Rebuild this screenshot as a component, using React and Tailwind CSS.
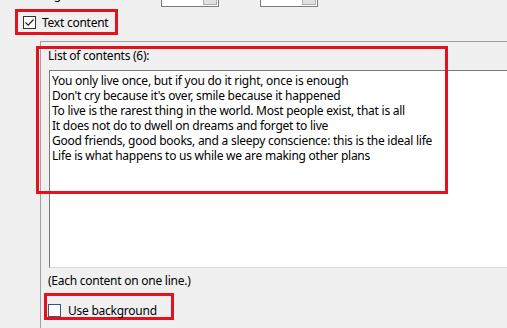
const QUOTES = [
  'You only live once, but if you do it right, once is enough',
  "Don't cry because it's over, smile because it happened",
  'To live is the rarest thing in the world. Most people exist, that is all',
  'It does not do to dwell on dreams and forget to live',
  'Good friends, good books, and a sleepy conscience: this is the ideal life',
  'Life is what happens to us while we are making other plans',
]

function Combo() {
  return (
    <div className="flex h-[21px] w-[58px] justify-end border border-[#7a7a7a] bg-white p-px">
      <div className="flex w-[14px] items-center justify-center border border-[#adadad] bg-[#e1e1e1]">
        <div className="h-0 w-0 border-x-[3px] border-t-[3px] border-x-transparent border-t-black" />
      </div>
    </div>
  )
}

function Check({ checked, color = 'border-[#333333]' }) {
  return (
    <div className={`flex h-[13px] w-[13px] shrink-0 items-center justify-center border bg-white ${color}`}>
      {checked && (
        <svg width="11" height="11" viewBox="0 0 11 11">
          <path d="M1.5 5.5 L4.2 8.2 L9.5 2.5" fill="none" stroke="#222" strokeWidth="1.2" />
        </svg>
      )}
    </div>
  )
}

export default function App() {
  return (
    <div className="relative h-[328px] w-[507px] overflow-hidden bg-[#f0f0f0] font-['Noto_Sans',sans-serif] text-[12px] leading-[15px] tracking-[-0.25px] text-black">

      {/* rangée du haut, coupée */}
      <div className="-mt-[14px] flex h-[21px] items-center">
        <span className="mb-[5px] ml-[33px] w-[128px]">Range</span>
        <Combo />
        <span className="mb-[3px] ml-[14px] w-[27px]">to</span>
        <Combo />
      </div>

      {/* Text content */}
      <div className="ml-[15px] mt-[2px] flex h-[26px] w-[103px] items-center border-[3px] border-[#e3121c] pl-[5px]">
        <Check checked />
        <span className="ml-[6px]">Text content</span>
      </div>

      {/* groupe */}
      <div className="ml-[40px] mt-[6px] h-[300px] border-l border-t border-[#a0a0a0]">
        <div className="pl-[7px] pt-[6px]">List of contents (6):</div>
        <div className="ml-[8px] mt-[7px] h-[198px] w-[500px] border border-[#7a7a7a] border-b-[#d9d9d9] border-r-[#d9d9d9] bg-white pl-[2px] pt-[2px]">
          {QUOTES.map(q => (
            <div key={q} className="whitespace-nowrap">{q}</div>
          ))}
        </div>
        <div className="mt-[5px] pl-[7px]">(Each content on one line.)</div>
        <div className="ml-[3px] mt-[5px] flex h-[27px] w-[130px] items-start border-[3px] border-[#e3121c] pl-px pt-[8px]">
          <Check color="border-[#2f5b86]" />
          <span className="ml-[7px] -mt-px">Use background</span>
        </div>
      </div>

      {/* cadre d'annotation autour de la liste */}
      <div className="pointer-events-none absolute left-[36px] top-[46px] h-[148px] w-[412px] border-[3px] border-[#e3121c]" />
    </div>
  )
}
